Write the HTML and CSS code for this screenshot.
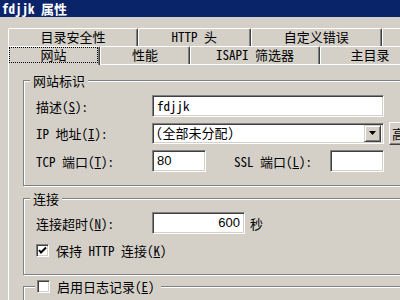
FILE: index.html
```html
<!DOCTYPE html>
<html lang="zh-CN">
<head>
  <meta charset="UTF-8">
  <title>fdjjk 属性</title>
  <link rel="stylesheet" href="styles.css">
</head>
<body>
  <div class="dialog">
    <div class="title">fdjjk 属性</div>

    <div class="tab-row back">
      <div class="tab w1">目录安全性</div>
      <div class="tab w2">HTTP 头</div>
      <div class="tab w3">自定义错误</div>
      <div class="tab w4"></div>
    </div>
    <div class="tab-row front">
      <div class="tab active w5"><span class="focus">网站</span></div>
      <div class="tab w6">性能</div>
      <div class="tab w7">ISAPI 筛选器</div>
      <div class="tab w8">主目录</div>
    </div>

    <div class="panel">
      <div class="group g1">
        <div class="legend">网站标识</div>
        <div class="row">
          <label class="lbl">描述(<u>S</u>):</label>
          <div class="field wide mono">fdjjk</div>
        </div>
        <div class="row">
          <label class="lbl">IP 地址(<u>I</u>):</label>
          <div class="field wide select">
            <span>(全部未分配)</span>
            <span class="drop">
              <svg width="7" height="4" viewBox="0 0 7 4"><polygon points="0,0 7,0 3.5,4" fill="#000"/></svg>
            </span>
          </div>
          <div class="btn adv">高级(<u>D</u>)...</div>
        </div>
        <div class="row r3">
          <label class="lbl">TCP 端口(<u>T</u>):</label>
          <div class="field port num">80</div>
          <label class="lbl ssl">SSL 端口(<u>L</u>):</label>
          <div class="field port"></div>
        </div>
      </div>

      <div class="group g2">
        <div class="legend">连接</div>
        <div class="row">
          <label class="lbl">连接超时(<u>N</u>):</label>
          <div class="field timeout num">600</div>
          <span class="unit">秒</span>
        </div>
        <div class="row check-row">
          <span class="box">
            <svg width="9" height="9" viewBox="0 0 9 9"><polyline points="1,4 3,6.5 8,1.5" fill="none" stroke="#000" stroke-width="2"/></svg>
          </span>
          <label>保持 HTTP 连接(<u>K</u>)</label>
        </div>
      </div>

      <div class="group g3">
        <div class="legend check-legend">
          <span class="box"></span>
          <label>启用日志记录(<u>E</u>)</label>
        </div>
      </div>
    </div>
  </div>
</body>
</html>
```

FILE: styles.css
```css
:root {
  --face: #d4d0c8;
  --light: #fff;
  --shadow: #808080;
  --dark: #404040;
  --title: #0a246a;
}
body {
  margin: 0;
  width: 400px; height: 300px;
  overflow: hidden;
  background: var(--face);
  font-family: "Noto Sans Mono CJK SC", "Noto Sans CJK SC", monospace;
  font-size: 13px;
  color: #000;
}
u { text-decoration: underline; }
.dialog {
  width: 480px;
}
.title {
  height: 17px;
  line-height: 17px;
  padding-left: 2px;
  background: var(--title);
  color: #fff;
  font-weight: bold;
}

/* tabs */
.tab-row {
  display: flex;
  align-items: flex-end;
  padding-left: 8px;
  height: 18px;
}
.tab-row.back { margin-top: 11px; }
.tab {
  box-sizing: border-box;
  height: 18px;
  line-height: 16px;
  text-align: center;
  border-top: 1px solid var(--light);
  border-left: 1px solid var(--light);
  border-right: 1px solid var(--dark);
  box-shadow: inset -1px 0 var(--shadow);
  border-radius: 2px 2px 0 0;
  background: var(--face);
  white-space: nowrap;
}
.w1 { width: 132px; }
.w2 { width: 115px; }
.w3 { width: 133px; }
.w4 { width: 100px; }
.w5 { width: 92px; }
.w6 { width: 90px; }
.w7 { width: 130px; }
.w8 { width: 100px; }
.tab.active {
  position: relative;
  height: 19px;
  margin-bottom: -1px;
  padding: 1px 2px 2px 1px;
}
.focus {
  display: block;
  height: 14px;
  line-height: 14px;
  outline: 1px dotted #000;
}

/* panel */
.panel {
  margin-left: 8px;
  border-top: 1px solid var(--light);
  border-left: 1px solid var(--light);
  padding: 15px 0 0 14px;
}
.group {
  position: relative;
  border: 1px solid var(--shadow);
  box-shadow: inset 1px 1px var(--light), 1px 1px var(--light);
  padding: 14px 0 0 12px;
}
.legend {
  position: absolute;
  top: -8px; left: 6px;
  padding: 0 3px;
  line-height: 15px;
  background: var(--face);
}
.g1 { height: 106px; box-sizing: border-box; }
.g2 {
  margin-top: 12px;
  height: 77px;
  box-sizing: border-box;
  padding-top: 13px;
}
.g3 { margin-top: 11px; height: 40px; }

.row {
  display: flex;
  align-items: center;
  height: 22px;
}
.row + .row { margin-top: 5px; }
.row.r3 { margin-top: 6px; }
.lbl {
  width: 116px;
  flex: none;
  white-space: nowrap;
}
.lbl.ssl {
  width: 96px;
  margin-left: 28px;
}

/* sunken fields */
.field {
  box-sizing: border-box;
  height: 22px;
  background: #fff;
  border: 1px solid;
  border-color: var(--shadow) var(--light) var(--light) var(--shadow);
  box-shadow: inset 1px 1px var(--dark), inset -1px -1px var(--face);
  padding: 0 4px;
  line-height: 20px;
  white-space: nowrap;
  flex: none;
}
.field.wide { width: 232px; }
.field.port { width: 54px; }
.field.timeout {
  width: 93px;
  text-align: right;
}
.num {
  font-family: "Liberation Sans", sans-serif;
  font-size: 13px;
}
.field.select {
  display: flex;
  align-items: center;
  justify-content: space-between;
  height: 21px;
  padding: 0 2px 0 3px;
}
.drop {
  box-sizing: border-box;
  width: 17px; height: 17px;
  display: flex;
  align-items: center;
  justify-content: center;
  background: var(--face);
  border: 1px solid;
  border-color: var(--face) var(--dark) var(--dark) var(--face);
  box-shadow: inset 1px 1px var(--light), inset -1px -1px var(--shadow);
}
.btn {
  box-sizing: border-box;
  height: 23px;
  line-height: 21px;
  background: var(--face);
  border: 1px solid;
  border-color: var(--light) var(--dark) var(--dark) var(--light);
  box-shadow: inset -1px -1px var(--shadow);
  white-space: nowrap;
}
.btn.adv {
  width: 80px;
  margin-left: 5px;
  padding-left: 2px;
  flex: none;
}
.unit { margin-left: 5px; }

/* check boxes */
.check-row { margin-top: 6px; }
.box {
  box-sizing: border-box;
  width: 13px; height: 13px;
  flex: none;
  display: flex;
  align-items: center;
  justify-content: center;
  background: #fff;
  border: 1px solid;
  border-color: var(--shadow) var(--light) var(--light) var(--shadow);
  box-shadow: inset 1px 1px var(--dark), inset -1px -1px var(--face);
}
.check-row .box { margin-right: 7px; }
.check-legend {
  display: flex;
  align-items: center;
  gap: 7px;
  left: 11px;
  padding: 0 6px 0 2px;
}
```
